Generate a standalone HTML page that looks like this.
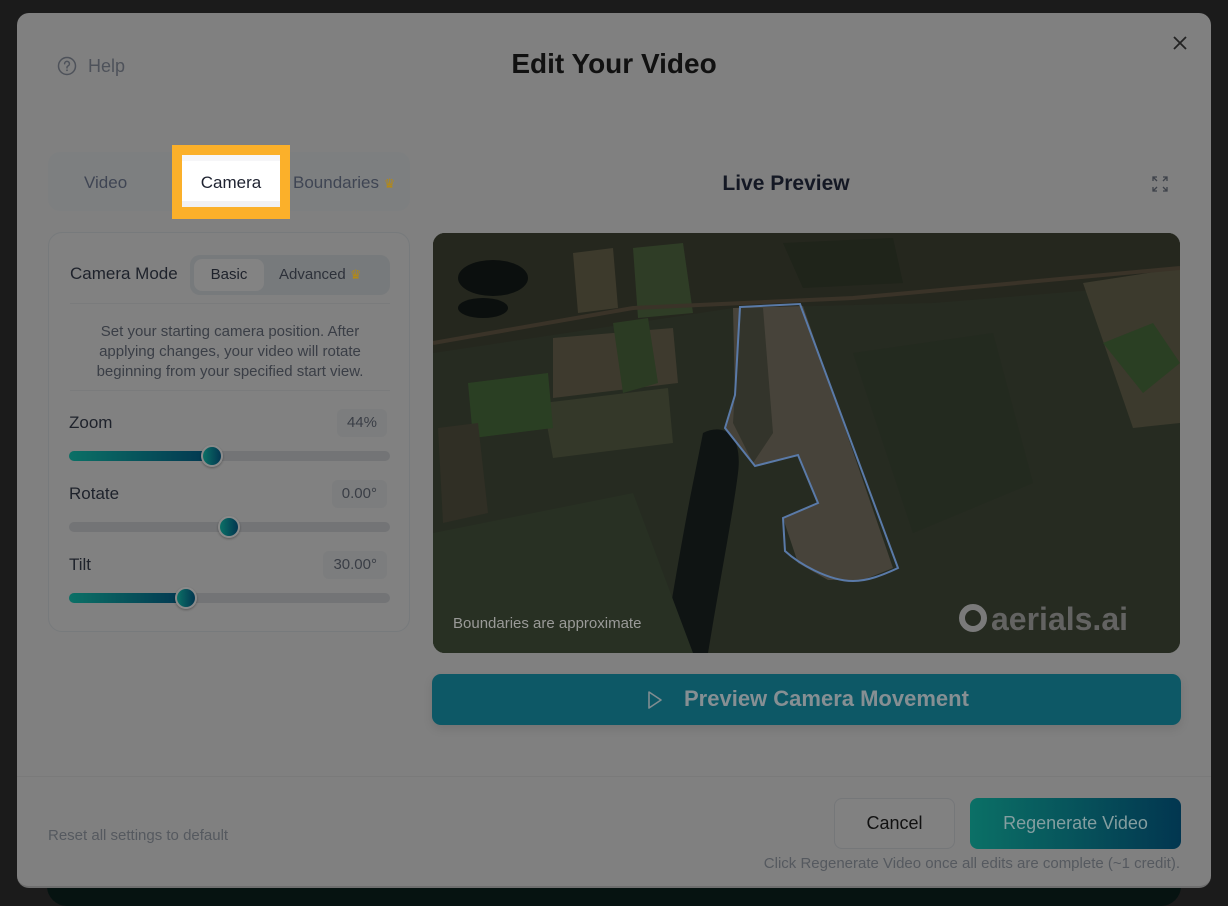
<!DOCTYPE html>
<html><head><meta charset="utf-8"><style>
*{box-sizing:border-box;margin:0;padding:0}
html,body{width:1228px;height:906px;overflow:hidden}
body{background:#1b1b1b;font-family:"Liberation Sans",Arial,sans-serif;position:relative}
.under{position:absolute;left:47px;top:870px;width:1134px;height:36px;background:#061311;border-radius:0 0 20px 20px}
.modal{position:absolute;left:17px;top:13px;width:1194px;height:875px;background:#808080;border-radius:12px;border-bottom:2px solid #6e6e6e}
.a{position:absolute}
.t{color:#141824}
.card{position:absolute;left:31px;top:219px;width:362px;height:400px;border:1px solid #777a7c;border-radius:14px;background:#818181}
.track{position:absolute;left:52px;width:321px;height:10px;border-radius:5px;background:#737476}
.fill{position:absolute;left:0;top:0;height:10px;border-radius:5px;background:linear-gradient(90deg,#0b7066,#023650)}
.knob{position:absolute;top:-6px;width:22px;height:22px;border-radius:50%;background:linear-gradient(90deg,#0b7066,#023650);border:2px solid #8a8a8a;box-shadow:0 1px 2px rgba(0,0,0,.3)}
.val{position:absolute;height:28px;padding:0 10px;line-height:28px;background:#7c7d7e;border-radius:6px;color:#3a3e46;font-size:15px}
.lbl{position:absolute;left:52px;font-size:17px;color:#1e222b}
</style></head><body>
<div class="under"></div>
<div class="modal">
 <svg class="a" style="left:40px;top:43px" width="20" height="20" viewBox="0 0 20 20"><circle cx="10" cy="10" r="8.5" fill="none" stroke="#4e525a" stroke-width="1.5"/><path d="M7.6 7.8a2.4 2.4 0 1 1 3.3 2.2c-.6.3-.9.7-.9 1.3v.6" fill="none" stroke="#4e525a" stroke-width="1.5" stroke-linecap="round"/><circle cx="10" cy="14.3" r=".9" fill="#4e525a"/></svg>
 <div class="a" style="left:71px;top:43px;font-size:18px;color:#4e525a">Help</div>
 <div class="a t" style="left:0;width:1194px;text-align:center;top:35px;font-size:28px;font-weight:bold;color:#111">Edit Your Video</div>
 <svg class="a" style="left:1156px;top:23px" width="14" height="14" viewBox="0 0 14 14"><path d="M1 1L13 13M13 1L1 13" stroke="#222" stroke-width="1.8"/></svg>

 <div class="a" style="left:31px;top:139px;width:362px;height:59px;background:#7d7f80;border-radius:12px"></div>
 <div class="a" style="left:67px;top:160px;font-size:17px;color:#3f4553">Video</div>
 <div class="a" style="left:155px;top:132px;width:118px;height:74px;background:#fbb02a"></div>
 <div class="a" style="left:165px;top:142px;width:98px;height:52px;background:#fff;border-top:6px solid #f6f6f8;border-bottom:6px solid #f1f1f4"></div>
 <div class="a" style="left:165px;top:160px;width:98px;text-align:center;font-size:17px;color:#1e2230">Camera</div>
 <div class="a" style="left:276px;top:160px;font-size:17px;color:#3f4553">Boundaries <span style="color:#b58a14;font-size:13px">♛</span></div>

 <div class="card">
  <div class="a" style="left:21px;top:31px;font-size:17px;color:#1e222b">Camera Mode</div>
  <div class="a" style="left:141px;top:22px;width:200px;height:40px;background:#777a7c;border-radius:10px"></div>
  <div class="a" style="left:145px;top:26px;width:70px;height:32px;background:#838383;border-radius:8px;text-align:center;line-height:32px;font-size:15px;color:#1e222b">Basic</div>
  <div class="a" style="left:230px;top:33px;font-size:15px;color:#2d313a">Advanced <span style="color:#b58a14;font-size:13px">♛</span></div>
  <div class="a" style="left:21px;top:70px;width:320px;border-top:1px solid #7a7b7c"></div>
  <div class="a" style="left:31px;top:89px;width:300px;text-align:center;font-size:15px;line-height:20px;color:#3a3e46">Set your starting camera position. After applying changes, your video will rotate beginning from your specified start view.</div>
  <div class="a" style="left:21px;top:157px;width:320px;border-top:1px solid #7a7b7c"></div>
 </div>
 <div class="lbl" style="top:400px">Zoom</div><div class="val" style="top:396px;right:824px">44%</div>
 <div class="track" style="top:438px"><div class="fill" style="width:145px"></div><div class="knob" style="left:132px"></div></div>
 <div class="lbl" style="top:471px">Rotate</div><div class="val" style="top:467px;right:824px">0.00°</div>
 <div class="track" style="top:509px"><div class="knob" style="left:149px"></div></div>
 <div class="lbl" style="top:542px">Tilt</div><div class="val" style="top:538px;right:824px">30.00°</div>
 <div class="track" style="top:580px"><div class="fill" style="width:118px"></div><div class="knob" style="left:106px"></div></div>

 <div class="a t" style="left:415px;width:708px;text-align:center;top:159px;font-size:21px;font-weight:bold;color:#141824">Live Preview</div>
 <svg class="a" style="left:1134px;top:162px" width="18" height="18" viewBox="0 0 18 18" fill="none" stroke="#3e424a" stroke-width="1.3"><path d="M2 6V2h4M2 2l4 4M16 6V2h-4M16 2l-4 4M2 12v4h4M2 16l4-4M16 12v4h-4M16 16l-4-4"/></svg>

 <div class="a" style="left:416px;top:220px;width:747px;height:420px;border-radius:12px;overflow:hidden;background:#252a21">
  <svg width="747" height="420" viewBox="0 0 747 420">
   <rect width="747" height="420" fill="#262b21"/>
   <polygon points="0,0 747,0 747,50 500,70 300,75 0,120" fill="#25271e"/>
   <polygon points="140,20 180,15 185,75 145,80" fill="#3d3a2c"/>
   <polygon points="200,15 250,10 260,80 205,85" fill="#2f3d26"/>
   <polygon points="120,105 240,95 245,150 120,165" fill="#3e3a2e"/>
   <polygon points="110,170 235,155 240,210 120,225" fill="#343829"/>
   <polygon points="35,150 115,140 120,195 40,205" fill="#2a3f23"/>
   <polygon points="5,195 45,190 55,280 10,290" fill="#302f25"/>
   <polygon points="180,90 215,85 225,150 190,160" fill="#2b3b23"/>
   <polygon points="650,50 747,35 747,190 700,195" fill="#3c3a2d"/>
   <polygon points="670,110 720,90 747,130 710,160" fill="#2a3f23"/>
   <polygon points="350,10 460,5 470,50 370,55" fill="#1f241a"/>
   <ellipse cx="60" cy="45" rx="35" ry="18" fill="#0b0f0e"/>
   <ellipse cx="50" cy="75" rx="25" ry="10" fill="#0b0f0e"/>
   <path d="M270 200 C290 190 310 200 305 240 C300 280 290 330 275 420 L230 420 C240 360 250 300 260 250 Z" fill="#0f1413"/>
   <polygon points="0,300 200,260 260,420 0,420" fill="#283023"/>
   <polygon points="420,120 560,100 600,250 480,300" fill="#232a1f"/>
   <polygon points="300,75 370,73 460,335 430,347 395,347 365,330 350,285 385,270 365,222 322,233 292,195 302,162" fill="#47433a"/>
   <polygon points="307,75 330,75 340,200 320,230 300,190" fill="#33342b"/>
   <path d="M307 74 L367 71 L465 335 C450 342 435 348 420 348 C395 348 365 330 352 318 L350 285 L385 270 L365 222 L322 233 L292 195 L302 162 Z" fill="none" stroke="#5a7aa8" stroke-width="2"/>
   <path d="M0 110 L200 75 L420 65 L747 35" stroke="#3a3328" stroke-width="4" fill="none"/>
   <text x="20" y="395" font-family="Liberation Sans,Arial,sans-serif" font-size="15" fill="#9a9a98">Boundaries are approximate</text>
   <circle cx="540" cy="385" r="11" fill="none" stroke="#7a7a7a" stroke-width="6"/>
   <text x="558" y="397" font-family="Liberation Sans,Arial,sans-serif" font-size="32" font-weight="bold" fill="#6a6a6a" opacity=".9">aerials.ai</text>
  </svg>
 </div>

 <div class="a" style="left:415px;top:661px;width:749px;height:51px;background:#0d5866;border-radius:9px;box-shadow:0 4px 10px rgba(0,0,0,.1)"></div>
 <svg class="a" style="left:630px;top:677px" width="16" height="20" viewBox="0 0 16 20"><path d="M2 2L14 10L2 18Z" fill="none" stroke="#7f8c90" stroke-width="1.6" stroke-linejoin="round"/></svg>
 <div class="a" style="left:667px;top:673px;font-size:22px;font-weight:bold;color:#868f93">Preview Camera Movement</div>

 <div class="a" style="left:0;top:763px;width:1194px;border-top:1px solid #7a7a7a"></div>
 <div class="a" style="left:31px;top:814px;font-size:15px;color:#55595f">Reset all settings to default</div>
 <div class="a" style="left:817px;top:785px;width:121px;height:51px;border:1px solid #757779;border-radius:8px;background:#818181;text-align:center;line-height:49px;font-size:18px;color:#111">Cancel</div>
 <div class="a" style="left:953px;top:785px;width:211px;height:51px;border-radius:8px;background:linear-gradient(90deg,#0b7066,#023650);text-align:center;line-height:51px;font-size:18px;color:#849ea0">Regenerate Video</div>
 <div class="a" style="right:31px;top:842px;font-size:15px;color:#55595f">Click Regenerate Video once all edits are complete (~1 credit).</div>
</div>
</body></html>
